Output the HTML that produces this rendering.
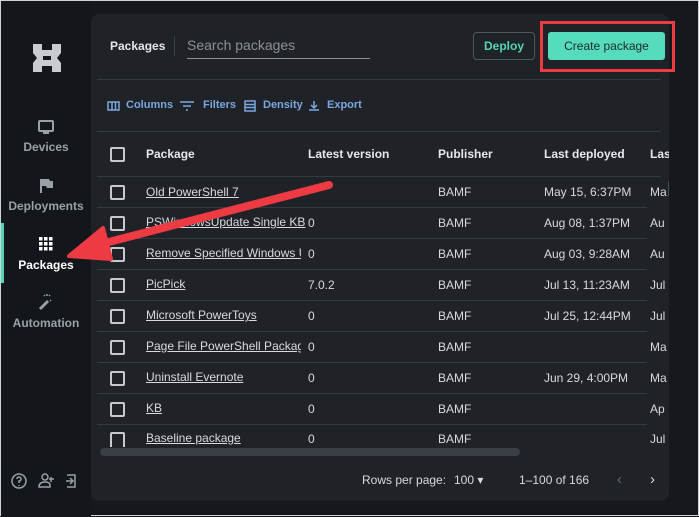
<!DOCTYPE html>
<html><head><style>
*{margin:0;padding:0;box-sizing:border-box}
body{width:699px;height:516px;background:#15191e;font-family:"Liberation Sans",sans-serif;position:relative;overflow:hidden;border:1px solid #cfd2d6}
.a{position:absolute;white-space:nowrap}
.side{position:absolute;left:0;top:0;width:90px;height:516px;background:#13171b}
.nav{position:absolute;left:0;width:90px;text-align:center;color:#9aa0a6;font-size:12px;font-weight:bold}
.panel{position:absolute;left:90px;top:13px;width:578px;height:487px;background:#1f2328;border-radius:8px;overflow:hidden}
.hl{position:absolute;height:1px;background:#353a40}
.cb{position:absolute;width:15px;height:15px;border:2px solid #c7c9cc;border-radius:2px}
.t{position:absolute;color:#d8dadc;font-size:12px;white-space:nowrap}
.u{text-decoration:underline}
.h{font-weight:bold;color:#e6e7e9}
.tb{position:absolute;color:#7aa7e0;font-size:11px;font-weight:bold}
</style></head><body>
<div class="side"></div>
<div style="position:absolute;left:0;top:222px;width:3px;height:60px;background:#53d6b6"></div>
<svg class="a" style="left:31px;top:42px" width="30" height="30" viewBox="0 0 30 30"><path fill="#c9cbce" d="M1 1h9v6h10V1h9v9l-4 5 4 5v9h-9v-6H10v6H1v-9l4-5-4-5z M11 13v4h8v-4z"/></svg>
<svg class="a" style="left:37px;top:118px" width="16" height="16" viewBox="0 0 16 16"><rect x="1" y="2" width="14" height="10" rx="1" fill="none" stroke="#9aa0a6" stroke-width="2"/><rect x="5" y="13" width="6" height="2" fill="#9aa0a6"/></svg>
<div class="nav" style="top:139px">Devices</div>
<svg class="a" style="left:38px;top:177px" width="14" height="15" viewBox="0 0 14 15"><path d="M1 1h9l1 2h3v7H8l-1-2H3v7H1z" fill="#9aa0a6"/></svg>
<div class="nav" style="top:198px">Deployments</div>
<svg class="a" style="left:38px;top:236px" width="14" height="14" viewBox="0 0 14 14" fill="#fff"><rect x="0" y="0" width="3.5" height="3.5"/><rect x="5" y="0" width="3.5" height="3.5"/><rect x="10" y="0" width="3.5" height="3.5"/><rect x="0" y="5" width="3.5" height="3.5"/><rect x="5" y="5" width="3.5" height="3.5"/><rect x="10" y="5" width="3.5" height="3.5"/><rect x="0" y="10" width="3.5" height="3.5"/><rect x="5" y="10" width="3.5" height="3.5"/><rect x="10" y="10" width="3.5" height="3.5"/></svg>
<div class="nav" style="top:257px;color:#fff">Packages</div>
<svg class="a" style="left:37px;top:292px" width="16" height="18" viewBox="0 0 16 18"><path d="M2 16l8-8" stroke="#9aa0a6" stroke-width="3"/><path d="M6 2l1 1M12 2l-1 1M13 8l-1-1M9 1v2" stroke="#9aa0a6" stroke-width="1.5"/></svg>
<div class="nav" style="top:315px">Automation</div>
<svg class="a" style="left:10px;top:471px" width="72" height="18" viewBox="0 0 72 18" fill="none" stroke="#9aa0a6" stroke-width="1.5"><circle cx="8" cy="9" r="7"/><path d="M6 7a2 2 0 1 1 2 2v2M8 13v1"/><circle cx="34" cy="5" r="3"/><path d="M28 15c0-4 3-5 6-5s5 1 5 3v2zM40 5v5M38 7h5"/><path d="M56 3h8v12h-8M55 9h7M59 6l3 3-3 3"/></svg>

<div class="panel">
<div class="t h" style="left:19px;top:25px;font-size:12px">Packages</div>
<div style="position:absolute;left:83px;top:22px;width:1px;height:20px;background:#3a3f45"></div>
<div class="t" style="left:96px;top:23px;font-size:14px;color:#8d9197">Search packages</div>
<div class="hl" style="left:96px;top:44px;width:183px;background:#8d9197"></div>
<div style="position:absolute;left:382px;top:18px;width:62px;height:28px;border:1px solid #50565c;border-radius:4px;color:#53d6b6;font-size:12px;font-weight:bold;text-align:center;line-height:26px">Deploy</div>
<div style="position:absolute;left:457px;top:18px;width:117px;height:28px;background:#56dbbd;border-radius:3px;color:#1d2a27;font-size:12px;text-align:center;line-height:28px">Create package</div>
<div class="hl" style="left:6px;top:65px;width:564px"></div>
<svg class="a" style="left:16px;top:86px" width="240" height="12" viewBox="0 0 240 12" fill="none" stroke="#7aa7e0" stroke-width="1.5"><rect x="1" y="2" width="11" height="8"/><path d="M5 2v8M8.5 2v8"/><path d="M73 2h14M76 6h8M79 10h2"/><rect x="138" y="1" width="10" height="10"/><path d="M138 4.5h10M138 7.5h10"/><path d="M207 1v7M204 5l3 3 3-3M202 10h10"/></svg>
<div class="tb" style="left:35px;top:85px">Columns</div>
<div class="tb" style="left:112px;top:85px">Filters</div>
<div class="tb" style="left:172px;top:85px">Density</div>
<div class="tb" style="left:236px;top:85px">Export</div>
<div class="hl" style="left:6px;top:117px;width:564px"></div>
<div class="cb" style="left:19px;top:133px"></div>
<div class="t h" style="left:55px;top:133px">Package</div>
<div class="t h" style="left:217px;top:133px">Latest version</div>
<div class="t h" style="left:347px;top:133px">Publisher</div>
<div class="t h" style="left:453px;top:133px">Last deployed</div>
<div class="t h" style="left:559px;top:133px">Last u</div>
<div class="hl" style="left:6px;top:162px;width:564px"></div>

<div style="position:absolute;left:0;top:163px;width:574px">
<div style="position:absolute;left:0;top:0;width:574px;height:31px"><div class="cb" style="left:19px;top:8px"></div><div class="t u" style="left:55px;top:8px">Old PowerShell 7</div><div class="t" style="left:347px;top:8px">BAMF</div><div class="t" style="left:453px;top:8px">May 15, 6:37PM</div><div class="t" style="left:559px;top:8px">Ma</div><div class="hl" style="left:6px;top:30px;width:550px"></div></div>
<div style="position:absolute;left:0;top:31px;width:574px;height:31px"><div class="cb" style="left:19px;top:8px"></div><div class="t u" style="left:55px;top:7px">PSWindowsUpdate Single KB</div><div class="t" style="left:217px;top:8px">0</div><div class="t" style="left:347px;top:8px">BAMF</div><div class="t" style="left:453px;top:8px">Aug 08, 1:37PM</div><div class="t" style="left:559px;top:8px">Au</div><div class="hl" style="left:6px;top:30px;width:550px"></div></div>
<div style="position:absolute;left:0;top:62px;width:574px;height:31px"><div class="cb" style="left:19px;top:8px"></div><div class="t u" style="left:55px;top:7px;width:155px;overflow:hidden">Remove Specified Windows Updates</div><div class="t" style="left:217px;top:8px">0</div><div class="t" style="left:347px;top:8px">BAMF</div><div class="t" style="left:453px;top:8px">Aug 03, 9:28AM</div><div class="t" style="left:559px;top:8px">Au</div><div class="hl" style="left:6px;top:30px;width:550px"></div></div>
<div style="position:absolute;left:0;top:93px;width:574px;height:31px"><div class="cb" style="left:19px;top:8px"></div><div class="t u" style="left:55px;top:7px">PicPick</div><div class="t" style="left:217px;top:8px">7.0.2</div><div class="t" style="left:347px;top:8px">BAMF</div><div class="t" style="left:453px;top:8px">Jul 13, 11:23AM</div><div class="t" style="left:559px;top:8px">Jul</div><div class="hl" style="left:6px;top:30px;width:550px"></div></div>
<div style="position:absolute;left:0;top:124px;width:574px;height:31px"><div class="cb" style="left:19px;top:8px"></div><div class="t u" style="left:55px;top:7px">Microsoft PowerToys</div><div class="t" style="left:217px;top:8px">0</div><div class="t" style="left:347px;top:8px">BAMF</div><div class="t" style="left:453px;top:8px">Jul 25, 12:44PM</div><div class="t" style="left:559px;top:8px">Jul</div><div class="hl" style="left:6px;top:30px;width:550px"></div></div>
<div style="position:absolute;left:0;top:155px;width:574px;height:31px"><div class="cb" style="left:19px;top:8px"></div><div class="t u" style="left:55px;top:7px;width:155px;overflow:hidden">Page File PowerShell Package</div><div class="t" style="left:217px;top:8px">0</div><div class="t" style="left:347px;top:8px">BAMF</div><div class="t" style="left:559px;top:8px">Ma</div><div class="hl" style="left:6px;top:30px;width:550px"></div></div>
<div style="position:absolute;left:0;top:186px;width:574px;height:31px"><div class="cb" style="left:19px;top:8px"></div><div class="t u" style="left:55px;top:7px">Uninstall Evernote</div><div class="t" style="left:217px;top:8px">0</div><div class="t" style="left:347px;top:8px">BAMF</div><div class="t" style="left:453px;top:8px">Jun 29, 4:00PM</div><div class="t" style="left:559px;top:8px">Ma</div><div class="hl" style="left:6px;top:30px;width:550px"></div></div>
<div style="position:absolute;left:0;top:217px;width:574px;height:31px"><div class="cb" style="left:19px;top:8px"></div><div class="t u" style="left:55px;top:7px">KB</div><div class="t" style="left:217px;top:8px">0</div><div class="t" style="left:347px;top:8px">BAMF</div><div class="t" style="left:559px;top:8px">Ap</div><div class="hl" style="left:6px;top:30px;width:550px"></div></div>
<div style="position:absolute;left:0;top:248px;width:574px;height:22px;overflow:hidden"><div class="cb" style="left:19px;top:7px;height:20px"></div><div class="t u" style="left:55px;top:6px">Baseline package</div><div class="t" style="left:217px;top:7px">0</div><div class="t" style="left:347px;top:7px">BAMF</div><div class="t" style="left:559px;top:7px">Jul</div></div>
</div>
<div style="position:absolute;left:9px;top:434px;width:420px;height:8px;background:#3a3f45;border-radius:4px"></div>
<div style="position:absolute;left:577px;top:166px;width:6px;height:18px;background:#4a4f55;border-radius:3px"></div>
<div class="t" style="left:271px;top:459px">Rows per page:</div>
<div class="t" style="left:363px;top:459px">100 ▾</div>
<div class="t" style="left:428px;top:459px">1–100 of 166</div>
<div class="t" style="left:526px;top:457px;color:#666b70;font-size:15px">‹</div>
<div class="t" style="left:559px;top:457px;font-size:15px">›</div>
</div>

<div style="position:absolute;left:539px;top:20px;width:135px;height:51px;border:3px solid #ee3b43"></div>
<svg class="a" style="left:0;top:0" width="699" height="516"><path d="M328 184L100 243" stroke="#ee3b43" stroke-width="8" stroke-linecap="round"/><path d="M68 255L102 227L110 258Z" fill="#ee3b43" stroke="#ee3b43" stroke-width="4" stroke-linejoin="round"/></svg>
</body></html>
